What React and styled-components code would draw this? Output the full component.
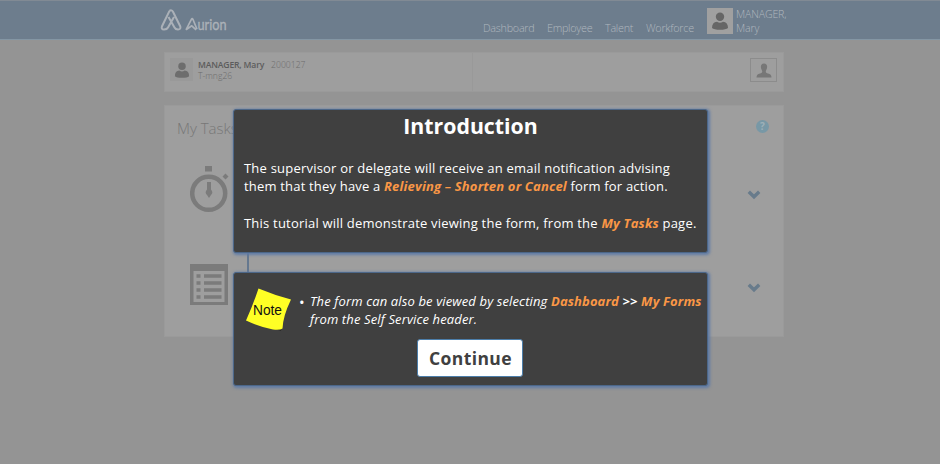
import React from "react";
import styled, { createGlobalStyle } from "styled-components";

const Global = createGlobalStyle`
  *{box-sizing:border-box}
  body{margin:0;background:#949494;font-family:"Open Sans","Noto Sans",sans-serif;overflow:hidden}
`;
const Page = styled.div`position:relative;width:940px;height:464px;background:#949494;`;
const Header = styled.header`
  height:40px;display:flex;justify-content:space-between;padding:0 154px 0 160px;
  background:#6d7d8d;border-top:1px solid #818a94;border-bottom:1px solid #8496a4;color:#b0b7be;
`;
const Brand = styled.div`
  display:flex;align-items:flex-start;padding-top:8px;
  svg{display:block}
`;
const Right = styled.div`display:flex;`;
const Nav = styled.nav`
  display:flex;gap:13px;padding:20px 13px 0 0;font-size:10.8px;line-height:14px;font-weight:300;letter-spacing:-.27px;
`;
const NavItem = styled.span`width:${p => p.$w}px;white-space:nowrap;`;
const Avatar = styled.div`
  width:${p => p.$size}px;height:${p => p.$size}px;background:${p => p.$bg};flex:none;
  display:flex;align-items:center;justify-content:center;
`;
const HeaderUser = styled.div`display:flex;gap:3px;padding-top:7px;width:79px;`;
const UserName = styled.div`font-size:10.6px;line-height:14px;margin-top:-1px;white-space:nowrap;font-weight:300;letter-spacing:-.15px;`;
const Main = styled.main`width:620px;margin:12px 0 0 164px;display:flex;flex-direction:column;gap:13px;`;
const Card = styled.section`background:#9e9e9e;border:1px solid #9a9a9a;`;
const Profile = styled(Card)`height:40px;display:grid;grid-template-columns:308px 1fr;`;
const Person = styled.div`display:flex;gap:5px;padding:5px 0 0 5px;border-right:1px solid #999;height:38px;`;
const Details = styled.div`font-size:8.6px;line-height:11px;color:#6c6c6c;padding-top:2px;white-space:pre;font-weight:300;`;
const Strong = styled.b`color:#5c5c5c;font-weight:600;margin-right:7px;letter-spacing:-.17px;`;
const PickerCell = styled.div`display:flex;justify-content:flex-end;padding:5px 6px 0 0;`;
const Picker = styled.div`
  width:27px;height:24px;border:1px solid #8c8c8c;display:flex;align-items:center;justify-content:center;
`;
const Tasks = styled(Card)`height:232px;padding:12px 14px 0 12px;`;
const TasksTop = styled.div`display:flex;justify-content:space-between;height:42px;align-items:flex-start;`;
const TasksTitle = styled.h2`margin:0;font-size:15px;font-weight:300;line-height:21px;color:#777;`;
const Help = styled.span`
  margin-top:2px;width:13px;height:13px;border-radius:50%;background:#7898a6;color:#9db0b8;
  font-size:10px;font-weight:700;line-height:13px;text-align:center;
`;
const TaskRow = styled.div`
  height:${p => p.$h}px;display:flex;justify-content:space-between;padding:0 8px 0 13px;align-items:flex-start;
  svg{display:block}
`;
const Arrow = styled.span`padding-top:${p => p.$top}px;`;
const Popup = styled.section`
  position:absolute;left:233px;top:${p => p.$top}px;width:475px;height:${p => p.$h}px;
  background:#404040;border:1px solid #4c6789;border-radius:3px;color:#fff;
  box-shadow:1px 1px 3px 1px #5f7ba6;
`;
const Connector = styled.i`position:absolute;left:247px;top:252px;width:2px;height:20px;background:#65788f;`;
const Title = styled.h1`margin:2px 0 0;font-size:21.3px;line-height:28px;text-align:center;font-weight:700;`;
const Copy = styled.div`padding:19px 0 0 10px;font-size:13px;line-height:18.3px;`;
const Line = styled.div`white-space:nowrap;height:${p => p.$h || 18.3}px;letter-spacing:${p => p.$ls || 0}px;`;
const Key = styled.b`color:#fa9746;font-style:italic;`;
const NoteRow = styled.div`display:flex;height:66px;padding:13px 0 0 9px;svg{display:block;flex:none}`;
const Bullet = styled.span`width:11px;margin-left:8px;font-size:15px;line-height:18px;padding-top:7px;`;
const NoteText = styled.div`font-style:italic;font-size:13px;line-height:18px;padding-top:6px;`;
const Continue = styled.button`
  display:block;width:106px;height:38px;margin:0 0 0 183px;background:#fff;border:1px solid #4c7eaa;border-radius:3px;
  padding:0 0 0 1px;font-family:inherit;font-size:17.5px;font-weight:700;color:#404040;line-height:36px;white-space:nowrap;letter-spacing:.4px;
`;

const Bust = ({ w, h, color }) => (
  <svg width={w} height={h} viewBox="0 0 18 18" preserveAspectRatio="none" fill={color}>
    <circle cx="9" cy="4.8" r="4.2" /><path d="M1 16q0-6 5-6.300 3 2 6 0 5 .3 5 6.300-2 1.800-8 1.800T1 16Z" />
  </svg>
);
const PickerBust = () => (
  <svg width="16" height="15" viewBox="0 0 16 15" fill="#777">
    <path d="M8 .5c2.600 0 3.500 2 3 4.500-.3 1.600-1 2.300-1.200 3.200-.1 1.500.6 1.800 2.200 2.300 2.400.7 3.500 1.500 3.500 4H.5c0-2.500 1.100-3.300 3.500-4 1.600-.5 2.300-.8 2.200-2.300C6 7.300 5.300 6.600 5 5 4.500 2.500 5.400.5 8 .5Z" />
  </svg>
);
const Chevron = () => (
  <svg width="14" height="10" viewBox="0 0 14 10" fill="none" stroke="#687b8b" strokeWidth="3.4"><path d="m1.800 1.800 5.200 5 5.200-5" /></svg>
);
const Stopwatch = () => (
  <svg width="40" height="54" viewBox="0 0 40 54">
    <path fill="#7b7b7b" d="M15 6h7v5.500h-7zM35.500 13.500l3 3-3 3-3-3z" />
    <circle cx="18.700" cy="33.300" r="16.500" fill="none" stroke="#7b7b7b" strokeWidth="4.500" />
    <path fill="#7b7b7b" d="M17 22h4v7.500q2.700 3 0 5.500l-2 3-2-3q-2.700-2.500 0-5.500z" />
  </svg>
);
const List = () => (
  <svg width="38" height="41" viewBox="0 0 38 41">
    <path fill="#7b7b7b" fillRule="evenodd" d="M0 0h38v41H0zM3.500 7v31h31V7z" />
    <path stroke="#7b7b7b" strokeWidth="3.500" d="M6.500 12h4M14 12h17.500M6.500 19h4M14 19h17.500M6.500 26h4M14 26h17.500M6.500 33h4M14 33h17.500" />
  </svg>
);
const Logo = () => (
  <svg width="70" height="26" viewBox="0 0 70 26" fill="none" stroke="#abb1b8" strokeWidth="2" strokeLinejoin="round">
    <path d="M9.500 1.900Q11.500 .4 13 2.700L20.300 17.500Q21 20.500 18 20.500Q15.500 20.500 14.500 18.500L8.500 8M9.500 1.900 1.900 17.500Q1 20.500 4 20.500Q7 20.500 8 18.500L14 8" />
    <path strokeWidth="1.700" d="m26 20.800 5.500-10.600Q32.200 9 33 10.500l4 9.800M26 20.800l5.800-4 4.300 4" />
    <text x="37.500" y="21" fill="#abb1b8" stroke="#abb1b8" strokeWidth=".35" fontFamily="Lato" fontSize="14.500" textLength="29" lengthAdjust="spacingAndGlyphs">urion</text>
  </svg>
);
const Note = () => (
  <svg width="48" height="48" viewBox="0 0 48 48">
    <path fill="#282828" d="m24 40 15-5-1 10z" />
    <path fill="#ffff25" d="M15.500 2.500Q31 9 48 13.500Q40 30 39.500 42.500Q37 44.500 30 43.500Q17 41 3 34.500Q10 19 15.500 2.500Z" />
    <text x="10" y="28.500" fill="#111" fontFamily="Liberation Sans" fontSize="14" textLength="29" lengthAdjust="spacingAndGlyphs">Note</text>
  </svg>
);

export default function App() {
  return (
    <Page>
      <Global />
      <Header>
        <Brand><Logo /></Brand>
        <Right>
          <Nav><NavItem $w={51}>Dashboard</NavItem><NavItem $w={45}>Employee</NavItem><NavItem $w={28}>Talent</NavItem><NavItem $w={48}>Workforce</NavItem></Nav>
          <HeaderUser><Avatar $size={26} $bg="#a0a0a0"><Bust w={18} h={18} color="#666" /></Avatar><UserName>MANAGER,<br />Mary</UserName></HeaderUser>
        </Right>
      </Header>
      <Main>
        <Profile>
          <Person><Avatar $size={23} $bg="#999"><Bust w={16} h={16} color="#6d6d6d" /></Avatar><Details><Strong>MANAGER, Mary</Strong>2000127<br />T-mng26</Details></Person>
          <PickerCell><Picker><PickerBust /></Picker></PickerCell>
        </Profile>
        <Tasks>
          <TasksTop><TasksTitle>My Tasks</TasksTitle><Help>?</Help></TasksTop>
          <TaskRow $h={104}><Stopwatch /><Arrow $top={30}><Chevron /></Arrow></TaskRow>
          <TaskRow $h={42}><List /><Arrow $top={19}><Chevron /></Arrow></TaskRow>
        </Tasks>
      </Main>
      <Connector />
      <Popup $top={109} $h={144}>
        <Title>Introduction</Title>
        <Copy>
          <Line $ls={0.21}>The supervisor or delegate will receive an email notification advising</Line>
          <Line $h={36.7} $ls={0.185}>them that they have a <Key>Relieving – Shorten or Cancel</Key> form for action.</Line>
          <Line $ls={0.21}>This tutorial will demonstrate viewing the form, from the <Key>My Tasks</Key> page.</Line>
        </Copy>
      </Popup>
      <Popup $top={272} $h={114}>
        <NoteRow>
          <Note /><Bullet>•</Bullet>
          <NoteText><Line $h={18} $ls={0.13}>The form can also be viewed by selecting <Key>Dashboard</Key> <b>&gt;&gt;</b> <Key>My Forms</Key></Line><Line $h={18} $ls={0.13}>from the Self Service header.</Line></NoteText>
        </NoteRow>
        <Continue>Continue</Continue>
      </Popup>
    </Page>
  );
}
